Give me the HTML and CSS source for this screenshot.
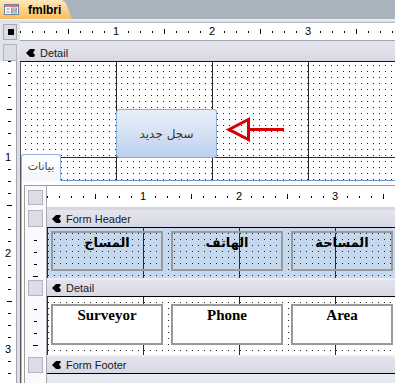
FILE: index.html
```html
<!DOCTYPE html>
<html lang="ar">
<head>
  <meta charset="UTF-8" />
  <title>fmlbri</title>
  <link rel="stylesheet" href="styles.css">
</head>
<body>
  <div class="doc-tabs">
    <div class="doc-tab">
      <svg class="form-icon" width="15" height="11" viewBox="0 0 15 11">
        <rect x="0.5" y="0.5" width="14" height="10" fill="#fff" stroke="#71839c"/>
        <rect x="1" y="1" width="13" height="2" fill="#e0708e"/>
        <rect x="2.5" y="4.5" width="3" height="1" fill="#71839c"/>
        <rect x="7.5" y="4" width="5" height="2" fill="#dfe6f0" stroke="#71839c" stroke-width="0.8"/>
        <rect x="2.5" y="7.5" width="3" height="1" fill="#71839c"/>
        <rect x="7.5" y="7" width="5" height="2" fill="#dfe6f0" stroke="#71839c" stroke-width="0.8"/>
      </svg>
      <span>fmlbri</span>
    </div>
  </div>

  <div class="ruler-row">
    <div class="corner"><div class="corner-box"><span></span></div></div>
    <div class="hruler main-ruler">
      <div class="inch"><span>1</span></div>
      <div class="inch"><span>2</span></div>
      <div class="inch"><span>3</span></div>
    </div>
  </div>

  <div class="bar-row">
    <div class="corner"><div class="side-box"></div></div>
    <div class="section-bar">
      <svg class="bar-icon" width="9" height="8" viewBox="0 0 9 8"><path d="M0 4 L4 0 H8 L9 1 L7 3.5 L9 6 L8 8 H4 Z"/></svg>
      Detail
    </div>
  </div>

  <div class="body-row">
    <div class="vruler">
      <div class="vinch"><span>1</span></div>
      <div class="vinch"><span>2</span></div>
      <div class="vinch"><span>3</span></div>
    </div>
    <div class="gutter"></div>

    <div class="canvas">
      <button class="cmd-new">سجل جديد</button>

      <svg class="arrow" width="62" height="26" viewBox="0 0 62 26">
        <path d="M3 12.5 L22.5 2.5 V22.5 Z" fill="none" stroke="#d80000" stroke-width="3"/>
        <path d="M23 12.5 H58" stroke="#d80000" stroke-width="3"/>
      </svg>

      <div class="tab-control">
        <div class="tab-strip">
          <div class="tab">بيانات</div>
          <div class="tab-fill"></div>
        </div>

        <div class="tab-page">
          <div class="subform">
            <div class="srow">
              <div class="sside"><div class="sbox ruler-box"></div></div>
              <div class="smain hruler sub-ruler">
                <div class="inch"><span>1</span></div>
                <div class="inch"><span>2</span></div>
                <div class="inch"><span>3</span></div>
              </div>
            </div>

            <div class="srow">
              <div class="sside bar-side"><div class="sbox"></div></div>
              <div class="smain sbar bar-header">
                <svg class="bar-icon" width="9" height="8" viewBox="0 0 9 8"><path d="M0 4 L4 0 H8 L9 1 L7 3.5 L9 6 L8 8 H4 Z"/></svg>
                Form Header
              </div>
            </div>

            <div class="srow">
              <div class="sside ticks"></div>
              <div class="smain sec sec-header">
                <div class="ctl label c1">المساح</div>
                <div class="ctl label c2">الهاتف</div>
                <div class="ctl label c3">المساحة</div>
              </div>
            </div>

            <div class="srow">
              <div class="sside bar-side"><div class="sbox"></div></div>
              <div class="smain sbar">
                <svg class="bar-icon" width="9" height="8" viewBox="0 0 9 8"><path d="M0 4 L4 0 H8 L9 1 L7 3.5 L9 6 L8 8 H4 Z"/></svg>
                Detail
              </div>
            </div>

            <div class="srow">
              <div class="sside ticks"></div>
              <div class="smain sec sec-detail">
                <div class="ctl textbox c1">Surveyor</div>
                <div class="ctl textbox c2">Phone</div>
                <div class="ctl textbox c3">Area</div>
              </div>
            </div>

            <div class="srow">
              <div class="sside bar-side"><div class="sbox"></div></div>
              <div class="smain sbar">
                <svg class="bar-icon" width="9" height="8" viewBox="0 0 9 8"><path d="M0 4 L4 0 H8 L9 1 L7 3.5 L9 6 L8 8 H4 Z"/></svg>
                Form Footer
              </div>
            </div>

            <div class="srow footer-row">
              <div class="sside"></div>
              <div class="smain"></div>
            </div>
          </div>
        </div>
      </div>
    </div>
  </div>
</body>
</html>
```

FILE: styles.css
```css
* {
  box-sizing: border-box;
}

body {
  margin: 0;
  width: 395px;
  height: 383px;
  overflow: hidden;
  display: flex;
  flex-direction: column;
  font-family: "Liberation Sans", Arial, sans-serif;
  font-size: 11px;
  color: #000;
  background-color: #e2e4eb;
}

/* pestaña del documento */
.doc-tabs {
  height: 19px;
  flex: none;
  display: flex;
  background-color: #a9b3bd;
}

.doc-tab {
  width: 72px;
  display: flex;
  align-items: center;
  gap: 9px;
  padding-left: 4px;
  font-size: 12px;
  font-weight: bold;
  background: linear-gradient(#fde8bd, #fcd28a 50%, #f8bd5e);
  clip-path: polygon(0 0, 62px 0, 66px 3px, 72px 100%, 0 100%);
}

/* reglas */
.ruler-row {
  height: 25px;
  flex: none;
  display: flex;
  border-top: 1px solid #f2f3f6;
  padding: 2px 0 3px;
}

.corner {
  width: 20px;
  flex: none;
  padding-left: 3px;
}

.corner-box {
  width: 14px;
  height: 16px;
  margin-top: 2px;
  padding: 4px 0 0 4px;
  background-color: #dcdce6;
  border: 1px solid #a9a9b6;
}

.corner-box span {
  display: block;
  width: 6px;
  height: 6px;
  background-color: #000;
}

.hruler {
  flex: 1;
  display: flex;
  background-color: #fff;
  background-image:
    repeating-linear-gradient(to right, #000 0 1px, transparent 1px 12px),
    repeating-linear-gradient(to right, transparent 0 48px, #000 48px 49px, transparent 49px 96px);
  background-size: 100% 2px, 100% 5px;
  background-repeat: no-repeat;
}

.main-ruler {
  height: 19px;
  border-top: 1px solid #b6bac6;
  border-bottom: 1px solid #a4a8b4;
  background-position: 0 8px, 0 6px;
}

.inch {
  width: 96px;
  flex: none;
  display: flex;
  justify-content: flex-end;
  align-items: center;
}

.inch span {
  width: 8px;
  margin-right: -4px;
  text-align: center;
  line-height: 11px;
  background-color: #fff;
}

/* barras de sección */
.bar-row {
  height: 17px;
  flex: none;
  display: flex;
}

.side-box {
  width: 14px;
  height: 17px;
  background-color: #dcdce6;
  border: 1px solid #b4b4c0;
}

.section-bar,
.sbar {
  flex: 1;
  display: flex;
  align-items: center;
  gap: 5px;
  padding-left: 6px;
  background: linear-gradient(#e4e4ee, #d8d8e4);
  color: #1a1a1a;
}

.bar-icon {
  flex: none;
}

/* cuerpo del formulario principal */
.body-row {
  flex: 1;
  min-height: 0;
  display: flex;
}

.vruler {
  width: 17px;
  flex: none;
  border-right: 1px solid #a6a6b2;
  background-color: #fff;
  background-image:
    repeating-linear-gradient(to bottom, #000 0 1px, transparent 1px 12px),
    repeating-linear-gradient(to bottom, transparent 0 48px, #000 48px 49px, transparent 49px 96px);
  background-size: 3px 100%, 5px 100%;
  background-position: 8px 0, 7px 0;
  background-repeat: no-repeat;
}

.vinch {
  height: 96px;
  display: flex;
  flex-direction: column;
  justify-content: flex-end;
  align-items: center;
}

.vinch span {
  width: 9px;
  margin-bottom: -5px;
  line-height: 10px;
  text-align: center;
  background-color: #fff;
}

.gutter {
  width: 3px;
  flex: none;
  background-color: #dcdce6;
}

.canvas {
  flex: 1;
  position: relative;
  overflow: hidden;
  border-top: 1px solid #111;
  border-left: 1px solid #555;
  background-color: #fff;
  background-image:
    linear-gradient(to right, #2a2a2a 1px, transparent 1px),
    linear-gradient(to bottom, #2a2a2a 1px, transparent 1px),
    conic-gradient(from 270deg at 1px 1px, #222 90deg, transparent 0);
  background-size: 96px 100%, 100% 96px, 6px 6px;
  background-position: 0 0, 0 0, 5px 4px;
  background-origin: border-box;
}

.cmd-new {
  position: absolute;
  left: 95px;
  top: 47px;
  width: 101px;
  height: 49px;
  padding: 0;
  font-family: "DejaVu Sans", sans-serif;
  font-size: 12px;
  color: #333;
  background: linear-gradient(#e9eff9, #d3e0f4 55%, #bccfee);
  border: 1px solid #8aaed8;
  border-radius: 3px;
}

.arrow {
  position: absolute;
  left: 205px;
  top: 55px;
}

/* control de pestañas */
.tab-control {
  position: absolute;
  left: 0;
  top: 92px;
  right: 0;
  bottom: 0;
  display: flex;
  flex-direction: column;
}

.tab-strip {
  height: 27px;
  flex: none;
  display: flex;
}

.tab {
  width: 40px;
  padding-top: 5px;
  text-align: center;
  font-family: "DejaVu Sans", sans-serif;
  font-size: 11px;
  color: #444;
  background: linear-gradient(#fff, #f4f7fb);
  border: 1px solid #93b1da;
  border-bottom: none;
  border-radius: 3px 3px 0 0;
}

.tab-fill {
  flex: 1;
  border-bottom: 1px solid #6f96cf;
}

.tab-page {
  flex: 1;
  display: flex;
  flex-direction: column;
  padding: 4px 0 0 2px;
  background-color: #fff;
  border-left: 1px solid #b2bccb;
}

/* subformulario */
.subform {
  flex: 1;
  display: flex;
  flex-direction: column;
  border-top: 1px solid #9e9e9e;
  border-left: 1px solid #9e9e9e;
  background-color: #e7eaef;
}

.srow {
  display: flex;
  flex: none;
}

.sside {
  width: 22px;
  flex: none;
  padding-left: 3px;
  border-right: 1px solid #a6a6b2;
  background-color: #fafafc;
}

.smain {
  flex: 1;
  position: relative;
}

.sbox {
  width: 15px;
  height: 100%;
  background-color: #dcdce6;
  border: 1px solid #b4b4c0;
}

.ruler-box {
  height: 15px;
  margin-top: 4px;
}

.bar-side {
  padding-bottom: 1px;
}

.sub-ruler {
  height: 24px;
  border-bottom: 3px solid #d6d8e0;
  background-position: 0 10px, 0 8px;
}

.sbar {
  height: 17px;
  padding-left: 5px;
  border-bottom: 1px solid #000;
}

.sbar.bar-header {
  height: 18px;
}

.ticks {
  background-image:
    repeating-linear-gradient(to bottom, #000 0 1px, transparent 1px 12px),
    repeating-linear-gradient(to bottom, #000 0 1px, transparent 1px 96px);
  background-size: 3px 100%, 5px 100%;
  background-position: 9px 12px, 8px 48px;
  background-repeat: no-repeat;
}

.sec {
  border-bottom: 2px solid #eceef3;
  background-image:
    linear-gradient(to right, #2a2a2a 1px, transparent 1px),
    conic-gradient(from 270deg at 1px 1px, #222 90deg, transparent 0);
  background-size: 96px 100%, 6px 6px;
  background-position: 0 0, 1px 5px;
  background-repeat: repeat-x, repeat;
}

.sec-header {
  height: 52px;
  background-color: #c5d8ee;
}

.sec-detail {
  height: 60px;
  background-color: #fff;
}

.footer-row {
  flex: 1;
}

.footer-row .smain {
  background-color: #e7eaef;
}

/* controles */
.ctl {
  position: absolute;
  top: 3px;
  height: 40px;
  width: 112px;
  text-align: center;
  border: 2px solid #9a9a9a;
}

.c1 {
  left: 4px;
}

.c2 {
  left: 124px;
}

.c3 {
  left: 244px;
  width: 102px;
}

.label {
  padding-top: 2px;
  font-family: "DejaVu Sans", sans-serif;
  font-size: 13px;
  font-weight: bold;
}

.textbox {
  top: 7px;
  height: 41px;
  padding-top: 1px;
  font-family: "Liberation Serif", "Times New Roman", serif;
  font-size: 15px;
  font-weight: bold;
  background-color: #fff;
}
```
